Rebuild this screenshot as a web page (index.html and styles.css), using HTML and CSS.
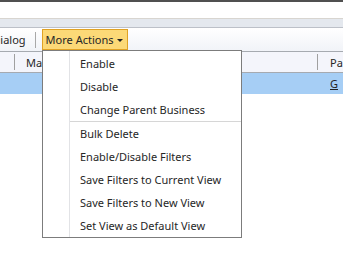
FILE: index.html
```html
<!DOCTYPE html>
<html>

<head>
    <meta charset="UTF-8">
    <link rel="stylesheet" href="styles.css">
</head>

<body>
    <div class="page">
        <div class="topbar"></div>
        <div class="tabstrip"></div>

        <div class="toolbar">
            <span class="tool-item tool-cut">Run Dialog</span>
            <span class="tool-sep"></span>
            <span class="tool-item tool-active">
                More Actions
                <span class="caret"></span>
            </span>
        </div>

        <div class="grid-header">
            <span class="col-sep"></span>
            <span class="col-name">Main Phone</span>
            <span class="col-fill"></span>
            <span class="col-sep"></span>
            <span class="col-parent">Parent Business</span>
        </div>

        <div class="grid-row selected">
            <span class="col-fill"></span>
            <span class="col-parent"><a href="#">G</a></span>
        </div>
    </div>

    <div class="menu">
        <div class="menu-item">Enable</div>
        <div class="menu-item">Disable</div>
        <div class="menu-item">Change Parent Business</div>
        <div class="menu-divider"></div>
        <div class="menu-item">Bulk Delete</div>
        <div class="menu-item">Enable/Disable Filters</div>
        <div class="menu-item">Save Filters to Current View</div>
        <div class="menu-item">Save Filters to New View</div>
        <div class="menu-item">Set View as Default View</div>
    </div>
</body>

</html>
```

FILE: styles.css
```css
html,
body {
    margin: 0;
    padding: 0;
    background: #ffffff;
}

body {
    font-family: "Noto Sans", "Open Sans", sans-serif;
    font-size: 11px;
    color: #262626;
    position: relative;
    width: 343px;
    height: 253px;
    overflow: hidden;
}

.page {
    width: 343px;
    overflow: hidden;
}

.topbar {
    height: 16px;
    border-top: 2px solid #505050;
    border-bottom: 1px solid #d8d5d0;
}

.tabstrip {
    height: 8px;
    background: #e4e8ee;
    border-bottom: 1px solid #bcc0c8;
}

.toolbar {
    height: 23px;
    display: flex;
    align-items: center;
    background: linear-gradient(#ffffff, #f1f3f8);
    white-space: nowrap;
}

.tool-item {
    display: flex;
    align-items: center;
    height: 19px;
    padding: 0 4px;
    line-height: 19px;
}

.tool-cut {
    margin-left: -35px;
}

.tool-sep {
    width: 1px;
    height: 16px;
    background: #a8a8a8;
    margin: 0 6px 0 5px;
}

.tool-active {
    background: #fcd977;
    border: 1px solid #e0a224;
    padding: 0 4px 0 3px;
}

.caret {
    width: 0;
    height: 0;
    border-left: 3px solid transparent;
    border-right: 3px solid transparent;
    border-top: 3px solid #222222;
    margin-left: 4px;
    margin-top: 1px;
}

.grid-header,
.grid-row {
    display: flex;
    align-items: center;
    white-space: nowrap;
}

.grid-header {
    height: 20px;
    background: #f4f5fb;
    border-top: 1px solid #a6aab0;
    border-bottom: 1px solid #a6aab0;
}

.grid-row {
    height: 21px;
}

.selected {
    background: #a6cef5;
}

.col-sep {
    width: 1px;
    height: 16px;
    background: #a0a0a0;
    margin-left: 14px;
}

.col-name {
    margin-left: 11px;
}

.col-fill {
    flex: 1;
}

.col-parent {
    width: 13px;
    margin-left: 12px;
    overflow: hidden;
}

.grid-row .col-parent {
    margin-left: 27px;
}

.col-parent a {
    color: #222222;
}

.menu {
    position: absolute;
    left: 42px;
    top: 50px;
    width: 198px;
    padding: 1px 0 0;
    background: #ffffff;
    border: 1px solid #7c7c7c;
    background-image: linear-gradient(#e2e3e6, #e2e3e6);
    background-size: 1px 100%;
    background-position: 26px 0;
    background-repeat: no-repeat;
}

.menu-item {
    height: 23px;
    line-height: 23px;
    padding-left: 37px;
    white-space: nowrap;
}

.menu-divider {
    height: 1px;
    margin: 0 0 0 27px;
    background: #d6d6d6;
}
```
